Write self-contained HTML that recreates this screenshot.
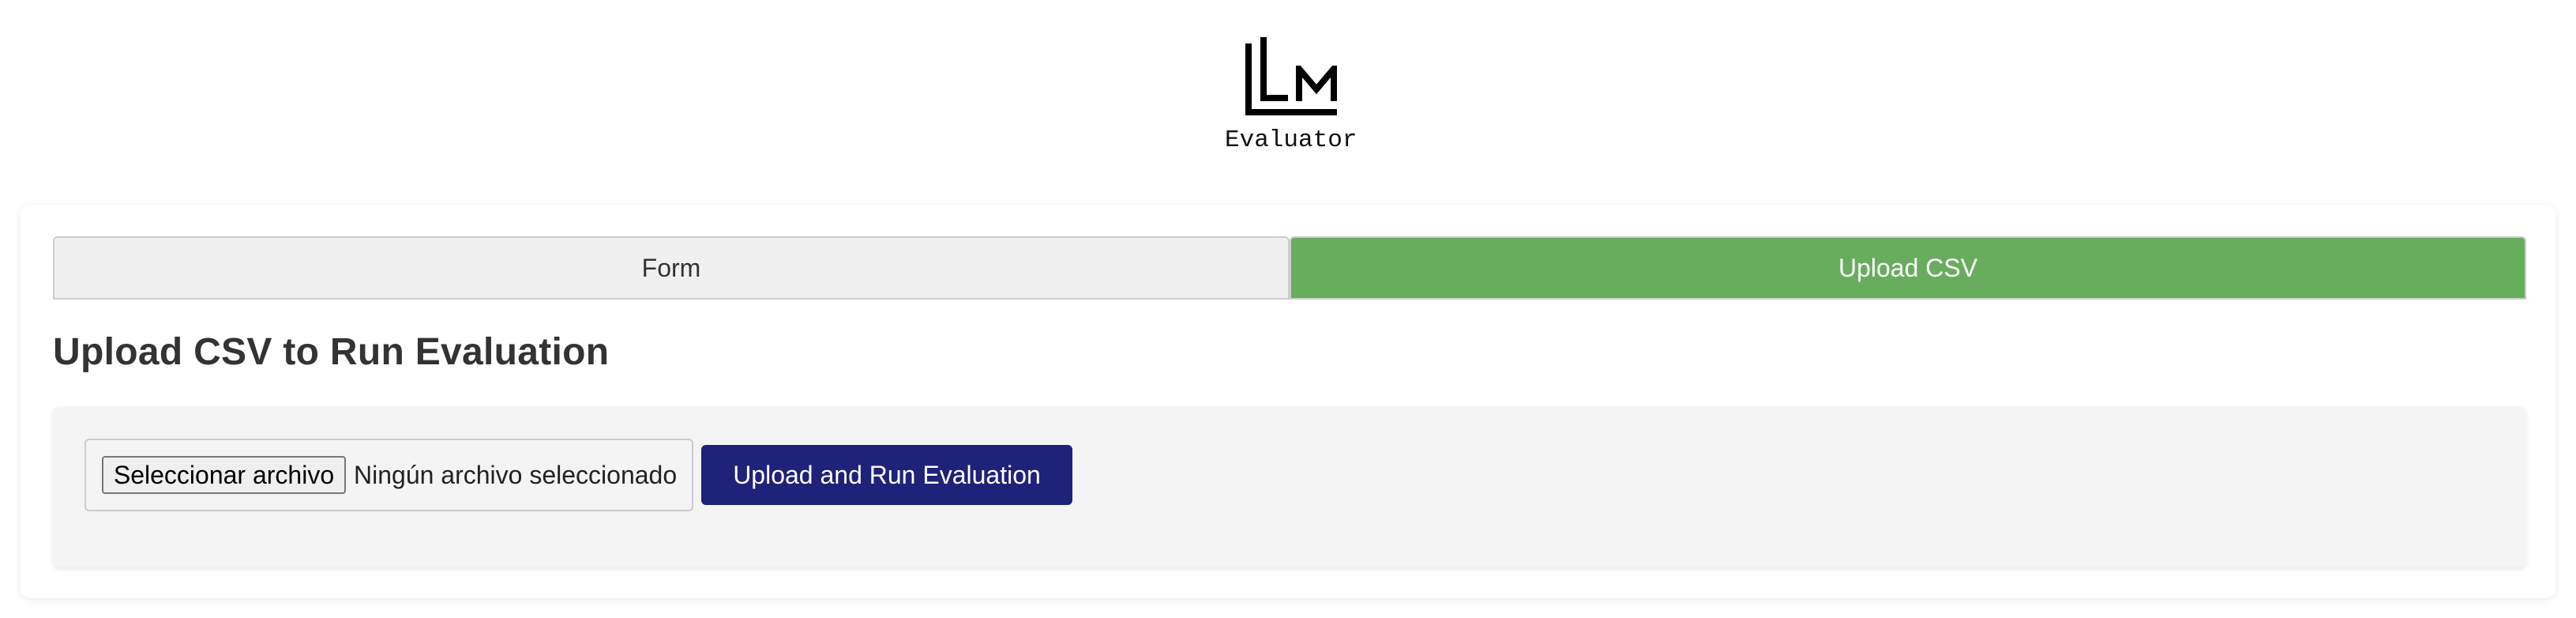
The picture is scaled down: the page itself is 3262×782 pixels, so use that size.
<!DOCTYPE html>
<html><head><meta charset="utf-8"><style>
body{margin:0;width:3262px;height:782px;background:#fff;font-family:"Liberation Sans",Arial,sans-serif;position:relative;overflow:hidden}
.a{position:absolute;box-sizing:border-box}
</style></head><body>
<div class="a" style="left:1577px;top:55px;width:8px;height:91px;background:#000"></div>
<div class="a" style="left:1577px;top:138px;width:116px;height:8px;background:#000"></div>
<div class="a" style="left:1596px;top:47px;width:8px;height:81px;background:#000"></div>
<div class="a" style="left:1596px;top:120px;width:35px;height:8px;background:#000"></div>
<svg class="a" style="left:1641px;top:83px" width="52" height="45" viewBox="0 0 52 45"><path d="M4 45V4L26 30L48 4V45" fill="none" stroke="#000" stroke-width="8"/></svg>
<div class="a" style="left:1551px;top:160px;font:31px 'Liberation Mono',monospace;color:#111;line-height:36px">Evaluator</div>

<div class="a" style="left:26px;top:259px;width:3210px;height:498px;background:#fff;border-radius:12px;box-shadow:0 2px 10px rgba(0,0,0,0.08)"></div>
<div class="a" style="left:67px;top:299px;width:1566px;height:80px;background:#f0f0f0;border:2px solid #ccc;border-radius:6px 6px 0 0;display:flex;align-items:center;justify-content:center;font-size:32px;color:#333">Form</div>
<div class="a" style="left:1633px;top:299px;width:1566px;height:80px;background:#68ad5d;border:2px solid #ccc;border-radius:6px 6px 0 0;display:flex;align-items:center;justify-content:center;font-size:32px;color:#fff">Upload CSV</div>
<div class="a" style="left:67px;top:416px;font-weight:bold;font-size:48px;letter-spacing:0.3px;color:#333;line-height:60px">Upload CSV to Run Evaluation</div>
<div class="a" style="left:67px;top:515px;width:3132px;height:203px;background:#f4f4f4;border-radius:8px;box-shadow:0 2px 6px rgba(0,0,0,0.1)"></div>
<div class="a" style="left:107px;top:555px;width:771px;height:92px;border:2px solid #ccc;border-radius:6px"></div>
<div class="a" style="left:129px;top:577px;width:309px;height:48px;border:2px solid #777;border-radius:4px;background:#efefef;display:flex;align-items:center;justify-content:center;font-size:32px;color:#000;white-space:nowrap">Seleccionar archivo</div>
<div class="a" style="left:448px;top:581px;font-size:32px;color:#222;line-height:40px">Ningún archivo seleccionado</div>
<div class="a" style="left:888px;top:563px;width:470px;height:76px;background:#1e2278;border-radius:6px;display:flex;align-items:center;justify-content:center;font-size:32px;color:#fff">Upload and Run Evaluation</div>
</body></html>
